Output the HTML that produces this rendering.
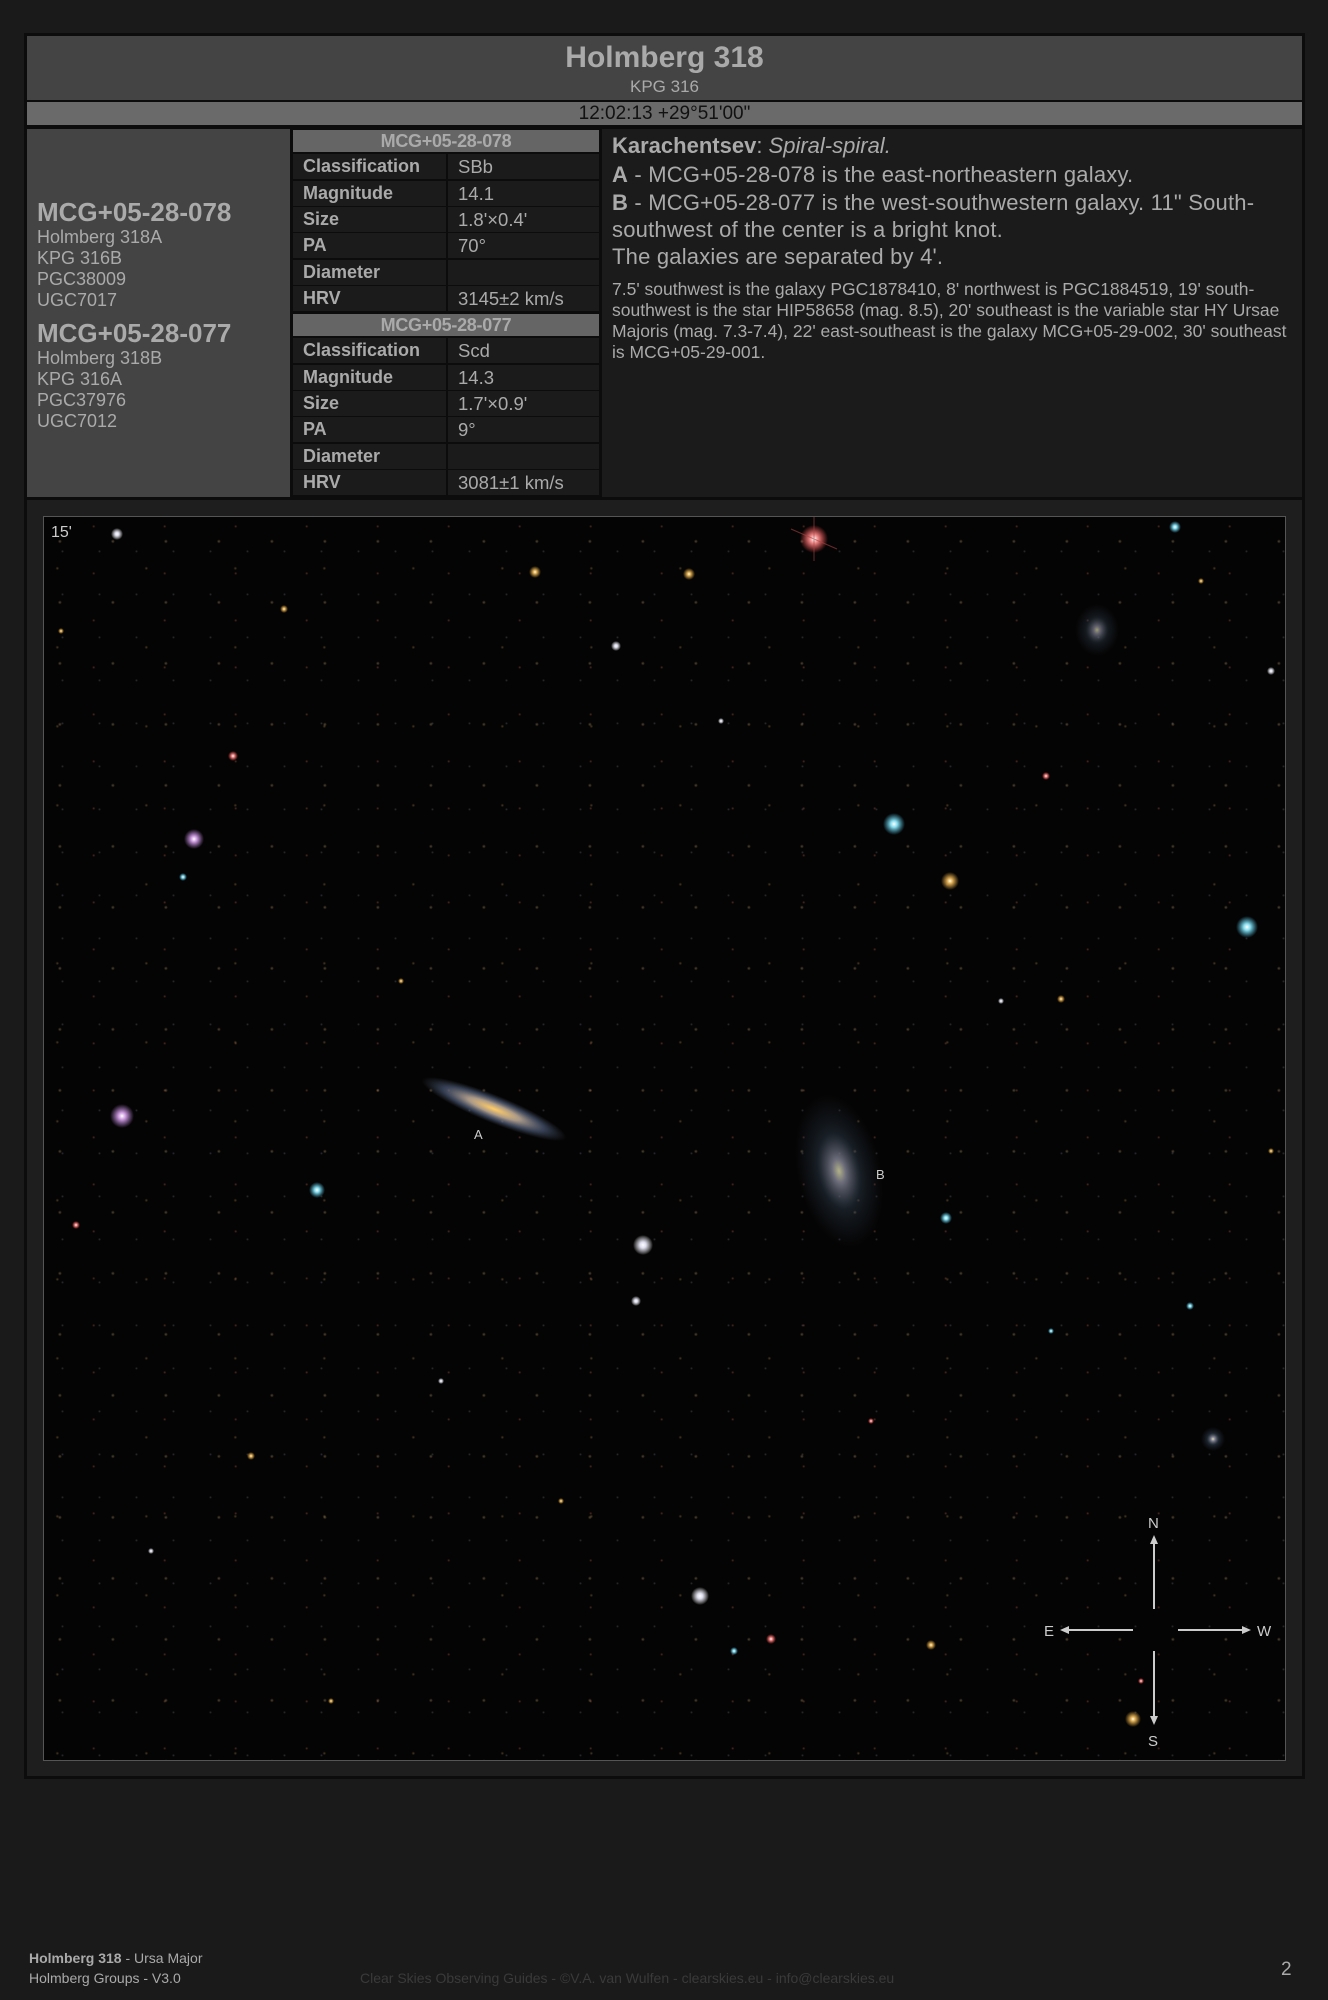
<!DOCTYPE html>
<html><head><meta charset="utf-8"><style>
*{margin:0;padding:0;box-sizing:border-box}
body{width:1328px;height:2000px;background:#1a1a1a;font-family:"Liberation Sans",sans-serif;position:relative;overflow:hidden;color:#aaa}
.abs{position:absolute}
.outer{left:24px;top:33px;width:1281px;height:1746px;background:#0c0c0c}
.title{left:27px;top:36px;width:1275px;height:64px;background:#444;text-align:center}
.coord{left:27px;top:102px;width:1275px;height:23px;background:#6a6a6a;text-align:center;color:#111;font-size:19px;line-height:23px}
.left{left:27px;top:129px;width:263px;height:368px;background:#444}
.desc{left:602px;top:129px;width:700px;height:368px;background:#1b1b1b;padding:3px 10px;color:#aaa}
.tbl{left:293px;top:129px;width:306px}
.hdr{position:absolute;left:0;width:306px;height:22px;background:#656565;color:#aaa;font-weight:bold;font-size:18px;text-align:center;line-height:22px;letter-spacing:-0.3px}
.row{position:absolute;left:0;width:306px;height:25px;background:#1b1b1b;line-height:25px}
.row b{position:absolute;left:10px;color:#aaa;font-size:18px}
.row span{position:absolute;left:165px;top:0;color:#aaa;font-weight:normal;font-size:18.5px}
.row i{position:absolute;left:153px;top:0;width:2px;height:25px;background:#0c0c0c}
.sec{left:27px;top:500px;width:1275px;height:1276px;background:#1e1e1e}
.img{left:43px;top:516px;width:1243px;height:1245px;background-color:#050404;border:1px solid #555;overflow:hidden;
background-image:
radial-gradient(circle at 30% 40%,rgba(200,170,120,.4) 0,rgba(200,170,120,0) 2px),
radial-gradient(circle at 70% 20%,rgba(220,120,90,.35) 0,rgba(220,120,90,0) 1.6px),
radial-gradient(circle at 50% 80%,rgba(180,180,200,.25) 0,rgba(180,180,200,0) 1.5px),
radial-gradient(circle at 15% 65%,rgba(200,160,90,.35) 0,rgba(200,160,90,0) 1.8px);
background-size:53px 61px,71px 47px,37px 43px,89px 79px}
.lg{font-size:18px;line-height:21px;color:#aaa}
</style></head><body>
<div class="abs outer"></div>
<div class="abs title">
<div style="font-size:30px;font-weight:bold;color:#aaa;padding-top:5px">Holmberg 318</div>
<div style="font-size:17px;color:#aaa;margin-top:2px">KPG 316</div>
</div>
<div class="abs coord">12:02:13 +29°51'00"</div>
<div class="abs left">
<div style="position:absolute;left:10px;top:68px">
<div style="font-size:26px;font-weight:bold;line-height:30px">MCG+05-28-078</div>
<div class="lg">Holmberg 318A<br>KPG 316B<br>PGC38009<br>UGC7017</div>
<div style="font-size:26px;font-weight:bold;line-height:30px;margin-top:7px">MCG+05-28-077</div>
<div class="lg">Holmberg 318B<br>KPG 316A<br>PGC37976<br>UGC7012</div>
</div>
</div>
<div class="abs tbl">
<div class="hdr" style="top:1px">MCG+05-28-078</div>
<div class="row" style="top:25px"><b>Classification</b><i></i><span>SBb</span></div>
<div class="row" style="top:52px"><b>Magnitude</b><i></i><span>14.1</span></div>
<div class="row" style="top:78px"><b>Size</b><i></i><span>1.8'×0.4'</span></div>
<div class="row" style="top:104px"><b>PA</b><i></i><span>70°</span></div>
<div class="row" style="top:131px"><b>Diameter</b><i></i><span></span></div>
<div class="row" style="top:157px"><b>HRV</b><i></i><span>3145±2 km/s</span></div>
<div class="hdr" style="top:185px">MCG+05-28-077</div>
<div class="row" style="top:209px"><b>Classification</b><i></i><span>Scd</span></div>
<div class="row" style="top:236px"><b>Magnitude</b><i></i><span>14.3</span></div>
<div class="row" style="top:262px"><b>Size</b><i></i><span>1.7'×0.9'</span></div>
<div class="row" style="top:288px"><b>PA</b><i></i><span>9°</span></div>
<div class="row" style="top:315px"><b>Diameter</b><i></i><span></span></div>
<div class="row" style="top:341px"><b>HRV</b><i></i><span>3081±1 km/s</span></div>
</div>
<div class="abs desc">
<div style="font-size:22px;line-height:27px"><b>Karachentsev</b>: <i>Spiral-spiral.</i></div>
<div style="font-size:22px;line-height:27px;margin-top:2px;letter-spacing:0.2px"><b>A</b> - MCG+05-28-078 is the east-northeastern galaxy.</div>
<div style="font-size:22px;line-height:27px;margin-top:1px;letter-spacing:0.2px"><b>B</b> - MCG+05-28-077 is the west-southwestern galaxy. 11" South-southwest of the center is a bright knot.<br>The galaxies are separated by 4'.</div>
<div style="font-size:17.5px;line-height:21px;margin-top:9px">7.5' southwest is the galaxy PGC1878410, 8' northwest is PGC1884519, 19' south-southwest is the star HIP58658 (mag. 8.5), 20' southeast is the variable star HY Ursae Majoris (mag. 7.3-7.4), 22' east-southeast is the galaxy MCG+05-29-002, 30' southeast is MCG+05-29-001.</div>
</div>
<div class="abs sec"></div>
<div class="abs img">
<svg width="1243" height="1245" viewBox="43 516 1243 1245" style="position:absolute;left:0;top:0">
<defs>
<radialGradient id="gw"><stop offset="0" stop-color="#fff"/><stop offset=".3" stop-color="#dde"/><stop offset="1" stop-color="#fff" stop-opacity="0"/></radialGradient>
<radialGradient id="gr"><stop offset="0" stop-color="#fff"/><stop offset=".3" stop-color="#e88"/><stop offset="1" stop-color="#f44" stop-opacity="0"/></radialGradient>
<radialGradient id="gc"><stop offset="0" stop-color="#fff"/><stop offset=".3" stop-color="#8de"/><stop offset="1" stop-color="#4bd" stop-opacity="0"/></radialGradient>
<radialGradient id="gy"><stop offset="0" stop-color="#ffd"/><stop offset=".3" stop-color="#da5"/><stop offset="1" stop-color="#c93" stop-opacity="0"/></radialGradient>
<radialGradient id="gp"><stop offset="0" stop-color="#fff"/><stop offset=".3" stop-color="#c9d"/><stop offset="1" stop-color="#a7c" stop-opacity="0"/></radialGradient>
<radialGradient id="ga"><stop offset="0" stop-color="#fc6"/><stop offset=".35" stop-color="#a98"/><stop offset=".7" stop-color="#568" stop-opacity=".6"/><stop offset="1" stop-color="#456" stop-opacity="0"/></radialGradient>
<radialGradient id="gb"><stop offset="0" stop-color="#dda"/><stop offset=".15" stop-color="#889"/><stop offset=".5" stop-color="#345" stop-opacity=".5"/><stop offset="1" stop-color="#234" stop-opacity="0"/></radialGradient>
</defs>
<ellipse cx="493" cy="1108" rx="78" ry="14" fill="url(#ga)" transform="rotate(22 493 1108)"/>
<ellipse cx="838" cy="1170" rx="42" ry="78" fill="url(#gb)" opacity=".8" transform="rotate(-12 838 1170)"/>
<ellipse cx="1096" cy="629" rx="22" ry="26" fill="url(#gb)" opacity=".7"/>
<circle cx="1212" cy="1438" r="12" fill="url(#gb)"/>
<circle cx="813" cy="538" r="14" fill="url(#gr)"/>
<path d="M790 528L836 548M813 516V560" stroke="#a44" stroke-width="1" opacity=".6"/>
<circle cx="893" cy="823" r="11" fill="url(#gc)"/>
<circle cx="1246" cy="926" r="11" fill="url(#gc)"/>
<circle cx="193" cy="838" r="10" fill="url(#gp)"/>
<circle cx="121" cy="1115" r="12" fill="url(#gp)"/>
<circle cx="642" cy="1244" r="10" fill="url(#gw)"/>
<circle cx="699" cy="1595" r="9" fill="url(#gw)"/>
<circle cx="949" cy="880" r="9" fill="url(#gy)"/>
<circle cx="316" cy="1189" r="8" fill="url(#gc)"/>
<circle cx="116" cy="533" r="6" fill="url(#gw)"/>
<circle cx="534" cy="571" r="6" fill="url(#gy)"/>
<circle cx="688" cy="573" r="6" fill="url(#gy)"/>
<circle cx="1174" cy="526" r="6" fill="url(#gc)"/>
<circle cx="232" cy="755" r="5" fill="url(#gr)"/>
<circle cx="1132" cy="1718" r="8" fill="url(#gy)"/>
<circle cx="945" cy="1217" r="6" fill="url(#gc)"/>
<circle cx="635" cy="1300" r="5" fill="url(#gw)"/>
<circle cx="770" cy="1638" r="5" fill="url(#gr)"/>
<circle cx="733" cy="1650" r="4" fill="url(#gc)"/>
<circle cx="930" cy="1644" r="5" fill="url(#gy)"/>
<circle cx="615" cy="645" r="5" fill="url(#gw)"/>
<circle cx="1060" cy="998" r="4" fill="url(#gy)"/>
<circle cx="182" cy="876" r="4" fill="url(#gc)"/>
<circle cx="75" cy="1224" r="4" fill="url(#gr)"/>
<circle cx="1270" cy="670" r="4" fill="url(#gw)"/>
<circle cx="1189" cy="1305" r="4" fill="url(#gc)"/>
<circle cx="283" cy="608" r="4" fill="url(#gy)"/>
<circle cx="1045" cy="775" r="4" fill="url(#gr)"/>
<circle cx="250" cy="1455" r="4" fill="url(#gy)"/>
<circle cx="1050" cy="1330" r="3" fill="url(#gc)"/>
<circle cx="440" cy="1380" r="3" fill="url(#gw)"/>
<circle cx="560" cy="1500" r="3" fill="url(#gy)"/>
<circle cx="1140" cy="1680" r="3" fill="url(#gr)"/>
<circle cx="1200" cy="580" r="3" fill="url(#gy)"/>
<circle cx="150" cy="1550" r="3" fill="url(#gw)"/>
<circle cx="330" cy="1700" r="3" fill="url(#gy)"/>
<circle cx="870" cy="1420" r="3" fill="url(#gr)"/>
<circle cx="1000" cy="1000" r="3" fill="url(#gw)"/>
<circle cx="400" cy="980" r="3" fill="url(#gy)"/>
<circle cx="720" cy="720" r="3" fill="url(#gw)"/>
<circle cx="60" cy="630" r="3" fill="url(#gy)"/>
<circle cx="1270" cy="1150" r="3" fill="url(#gy)"/>
<g stroke="#ccc" stroke-width="2" fill="#ccc">
<line x1="1153" y1="1541" x2="1153" y2="1608"/><path d="M1149 1543L1153 1534L1157 1543Z" stroke="none"/>
<line x1="1153" y1="1650" x2="1153" y2="1717"/><path d="M1149 1715L1153 1724L1157 1715Z" stroke="none"/>
<line x1="1132" y1="1629" x2="1066" y2="1629"/><path d="M1068 1625L1059 1629L1068 1633Z" stroke="none"/>
<line x1="1177" y1="1629" x2="1243" y2="1629"/><path d="M1241 1625L1250 1629L1241 1633Z" stroke="none"/>
</g>
<g font-family="Liberation Sans,sans-serif" fill="#ccc" font-size="15">
<text x="1147" y="1527">N</text><text x="1147" y="1745">S</text>
<text x="1043" y="1635">E</text><text x="1256" y="1635">W</text>
<text x="473" y="1138" font-size="13">A</text><text x="875" y="1178" font-size="13">B</text>
<text x="50" y="536" font-size="16">15'</text>
</g>
</svg>
</div>
<div class="abs" style="left:29px;top:1948px;font-size:14px;line-height:20px;color:#aaa"><b>Holmberg 318</b> - Ursa Major<br>Holmberg Groups - V3.0</div>
<div class="abs" style="left:360px;top:1968px;font-size:14px;line-height:20px;color:#3a3a3a">Clear Skies Observing Guides - ©V.A. van Wulfen - clearskies.eu - info@clearskies.eu</div>
<div class="abs" style="left:1281px;top:1959px;font-size:19px;color:#aaa">2</div>
</body></html>
